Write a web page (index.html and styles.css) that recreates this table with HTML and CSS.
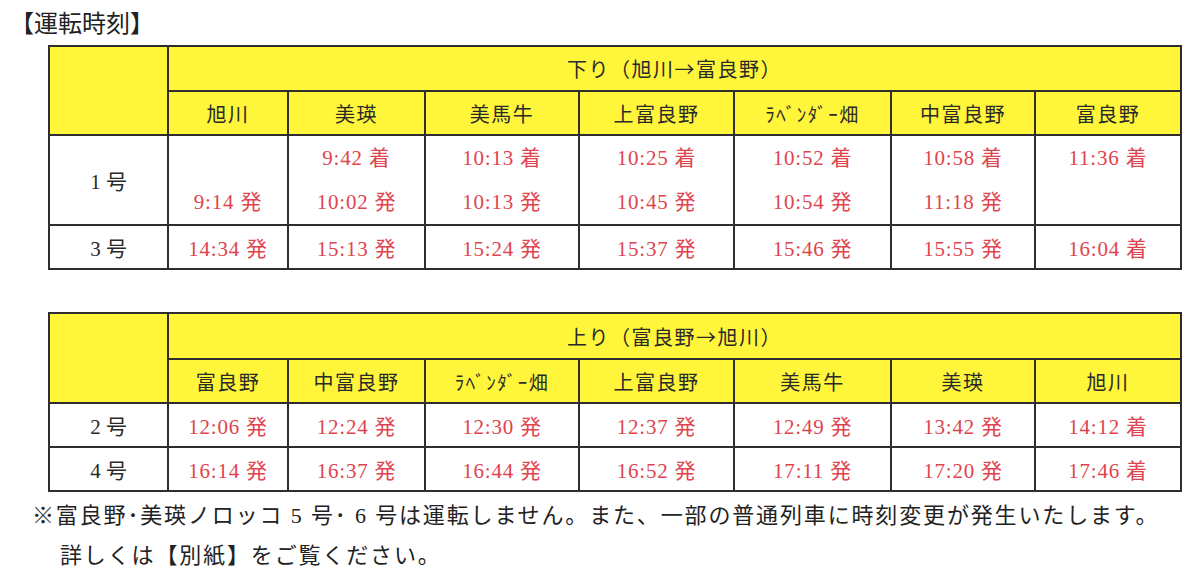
FILE: index.html
```html
<!DOCTYPE html>
<html lang="ja">
<head>
<meta charset="utf-8">
<link rel="stylesheet" href="styles.css">
</head>
<body>
<div class="page">
  <h1 class="title">【運転時刻】</h1>

  <table class="tt tt-down">
    <colgroup>
      <col class="c0"><col class="c1"><col class="c2"><col class="c3"><col class="c4"><col class="c5"><col class="c6"><col class="c7">
    </colgroup>
    <tr class="h1">
      <th class="corner" rowspan="2"></th>
      <th colspan="7">下り（旭川→富良野）</th>
    </tr>
    <tr class="h2">
      <th>旭川</th><th>美瑛</th><th>美馬牛</th><th>上富良野</th><th class="hw">ﾗﾍﾞﾝﾀﾞｰ畑</th><th>中富良野</th><th>富良野</th>
    </tr>
    <tr class="r-double">
      <td class="no">1 号</td>
      <td class="t"><div class="ln"></div><div class="ln">9:14 発</div></td>
      <td class="t"><div class="ln">9:42 着</div><div class="ln">10:02 発</div></td>
      <td class="t"><div class="ln">10:13 着</div><div class="ln">10:13 発</div></td>
      <td class="t"><div class="ln">10:25 着</div><div class="ln">10:45 発</div></td>
      <td class="t"><div class="ln">10:52 着</div><div class="ln">10:54 発</div></td>
      <td class="t"><div class="ln">10:58 着</div><div class="ln">11:18 発</div></td>
      <td class="t"><div class="ln">11:36 着</div><div class="ln"></div></td>
    </tr>
    <tr class="r-single">
      <td class="no">3 号</td>
      <td class="t">14:34 発</td>
      <td class="t">15:13 発</td>
      <td class="t">15:24 発</td>
      <td class="t">15:37 発</td>
      <td class="t">15:46 発</td>
      <td class="t">15:55 発</td>
      <td class="t">16:04 着</td>
    </tr>
  </table>

  <table class="tt tt-up">
    <colgroup>
      <col class="c0"><col class="c1"><col class="c2"><col class="c3"><col class="c4"><col class="c5"><col class="c6"><col class="c7">
    </colgroup>
    <tr class="h1">
      <th class="corner" rowspan="2"></th>
      <th colspan="7">上り（富良野→旭川）</th>
    </tr>
    <tr class="h2">
      <th>富良野</th><th>中富良野</th><th class="hw">ﾗﾍﾞﾝﾀﾞｰ畑</th><th>上富良野</th><th>美馬牛</th><th>美瑛</th><th>旭川</th>
    </tr>
    <tr class="r-single">
      <td class="no">2 号</td>
      <td class="t">12:06 発</td>
      <td class="t">12:24 発</td>
      <td class="t">12:30 発</td>
      <td class="t">12:37 発</td>
      <td class="t">12:49 発</td>
      <td class="t">13:42 発</td>
      <td class="t">14:12 着</td>
    </tr>
    <tr class="r-single">
      <td class="no">4 号</td>
      <td class="t">16:14 発</td>
      <td class="t">16:37 発</td>
      <td class="t">16:44 発</td>
      <td class="t">16:52 発</td>
      <td class="t">17:11 発</td>
      <td class="t">17:20 発</td>
      <td class="t">17:46 着</td>
    </tr>
  </table>

  <div class="note">
    <p class="note-line">※富良野･美瑛ノロッコ 5 号･ 6 号は運転しません。また、一部の普通列車に時刻変更が発生いたします。</p>
    <p class="note-line indent">詳しくは【別紙】をご覧ください。</p>
  </div>
</div>
</body>
</html>
```

FILE: styles.css
```css
html, body {
  margin: 0;
  padding: 0;
  background: #ffffff;
}

.page {
  width: 1200px;
  height: 585px;
  overflow: hidden;
  font-family: "Noto Sans CJK JP", sans-serif;
  color: #2a2a2a;
}

.title {
  margin: 0;
  padding: 7px 0 0 10px;
  height: 45px;
  box-sizing: border-box;
  font-size: 24px;
  line-height: 30px;
  font-weight: 400;
  letter-spacing: 0;
  color: #222;
}

.tt {
  margin-left: 48px;
  width: 1132px;
  border-collapse: collapse;
  table-layout: fixed;
}

.tt-up {
  margin-top: 42px;
}

.c0 { width: 119px; }
.c1 { width: 120px; }
.c2 { width: 137px; }
.c3 { width: 154px; }
.c4 { width: 155px; }
.c5 { width: 157px; }
.c6 { width: 144px; }
.c7 { width: 146px; }

.tt th,
.tt td {
  border: 2px solid #2e2e2e;
  padding: 0;
  text-align: center;
  vertical-align: middle;
}

.tt th {
  background: #fff53a;
  font-weight: 400;
  font-size: 20px;
  color: #2a2a2a;
  letter-spacing: 1.5px;
}

.tt .h1 th { height: 43px; }
.tt .h2 th { height: 42px; }
.tt-up .h1 th { height: 44px; }

.tt th.hw {
  font-size: 19px;
  letter-spacing: 1.5px;
}

.tt td {
  background: #ffffff;
}

.tt .no {
  font-family: "Liberation Serif", "Noto Sans CJK JP", serif;
  font-size: 21px;
  color: #2a2a2a;
}

.tt .t {
  font-family: "Liberation Serif", "Noto Sans CJK JP", serif;
  font-size: 21px;
  color: #e0444e;
  letter-spacing: 0.8px;
}

.r-single td { height: 42px; }
.r-double td { height: 87px; }

.ln {
  height: 44px;
  line-height: 44px;
}

.note {
  padding: 4px 0 0 32px;
}

.note-line {
  margin: 0;
  font-family: "Liberation Serif", "Noto Sans CJK JP", serif;
  font-size: 22px;
  line-height: 40px;
  letter-spacing: 1.85px;
  color: #222;
}

.note-line.indent {
  padding-left: 28px;
}
```
